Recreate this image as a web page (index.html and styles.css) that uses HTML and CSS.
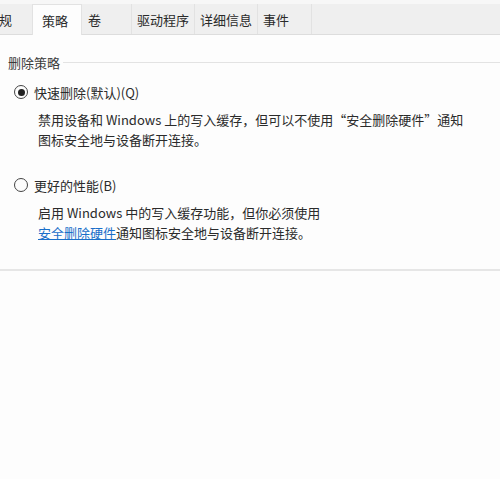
FILE: index.html
```html
<!DOCTYPE html>
<html lang="zh-CN">
  <head>
    <meta charset="UTF-8" />
    <meta name="viewport" content="width=device-width, initial-scale=1.0" />
    <title>属性</title>
    <link rel="stylesheet" href="styles.css">
  </head>
  <body>
    <div class="dialog">
      <div class="tabs">
        <span class="tab tab-first">规</span>
        <span class="tab active">策略</span>
        <span class="tab tab-vol">卷</span>
        <span class="tab">驱动程序</span>
        <span class="tab">详细信息</span>
        <span class="tab tab-last">事件</span>
      </div>

      <div class="group">
        <div class="group-title">
          <span>删除策略</span>
          <span class="group-line"></span>
        </div>

        <div class="option">
          <label class="radio-row">
            <span class="radio checked"></span>
            <span>快速删除(默认)(Q)</span>
          </label>
          <div class="desc">
            <span class="line">禁用设备和 Windows 上的写入缓存，但可以不使用“安全删除硬件”通知</span>
            <span class="line">图标安全地与设备断开连接。</span>
          </div>
        </div>

        <div class="option">
          <label class="radio-row">
            <span class="radio"></span>
            <span>更好的性能(B)</span>
          </label>
          <div class="desc">
            <span class="line">启用 Windows 中的写入缓存功能，但你必须使用</span>
            <span class="line"><a href="#">安全删除硬件</a>通知图标安全地与设备断开连接。</span>
          </div>
        </div>
      </div>
    </div>
  </body>
</html>
```

FILE: styles.css
```css
* {
  margin: 0;
  padding: 0;
  box-sizing: border-box;
}

body {
  width: 500px;
  height: 479px;
  overflow: hidden;
  background-color: #fdfdfd;
  color: #2b2b2b;
  font-family: "Noto Sans CJK SC", "Liberation Sans", sans-serif;
  font-size: 13px;
}

/* Tabs */

.tabs {
  display: flex;
  align-items: flex-end;
  height: 35px;
  padding-top: 4px;
  background: linear-gradient(#f7f7f7 0, #f7f7f7 4px, #efefef 4px);
  border-bottom: 1px solid #dddddd;
  padding-right: 188px;
}

.tab {
  height: 30px;
  display: flex;
  align-items: center;
  padding: 0 5px;
  border-right: 1px solid #e2e2e2;
  color: #2a2a2a;
}

.tab-first {
  padding-left: 0;
  width: 33px;
  margin-left: -1px;
  border-right: none;
}

.tab.active {
  background-color: #fdfdfd;
  width: 50px;
  padding-left: 9px;
  height: 31px;
  margin-bottom: -1px;
  border: 1px solid #e2e2e2;
  border-bottom: none;
}

.tab-vol {
  width: 50px;
  padding-left: 6px;
}

.tab-last {
  flex: 1;
}

/* Group */

.group {
  height: 236px;
  border-bottom: 2px solid #e6e6e6;
  padding-top: 17px;
}

.group-title {
  display: flex;
  align-items: center;
  gap: 3px;
  height: 20px;
  padding-left: 8px;
  color: #3a3a3a;
}

.group-line {
  flex: 1;
  height: 1px;
  background-color: #e3e3e3;
}

.option {
  padding-left: 14px;
}

.option + .option {
  margin-top: 25px;
}

.radio-row {
  display: flex;
  align-items: center;
  gap: 6px;
  height: 20px;
  margin-top: 10px;
}

.radio {
  width: 14px;
  height: 14px;
  border: 1px solid #444;
  border-radius: 50%;
  display: flex;
  align-items: center;
  justify-content: center;
}

.radio.checked::after {
  content: "";
  width: 7px;
  height: 7px;
  border-radius: 50%;
  background-color: #222;
}

.desc {
  padding-left: 24px;
  margin-top: 8px;
  color: #2b2b2b;
}

.line {
  display: block;
  height: 20px;
  line-height: 20px;
  white-space: nowrap;
}

.desc a {
  color: #1a6fc9;
  text-decoration: underline;
}
```
